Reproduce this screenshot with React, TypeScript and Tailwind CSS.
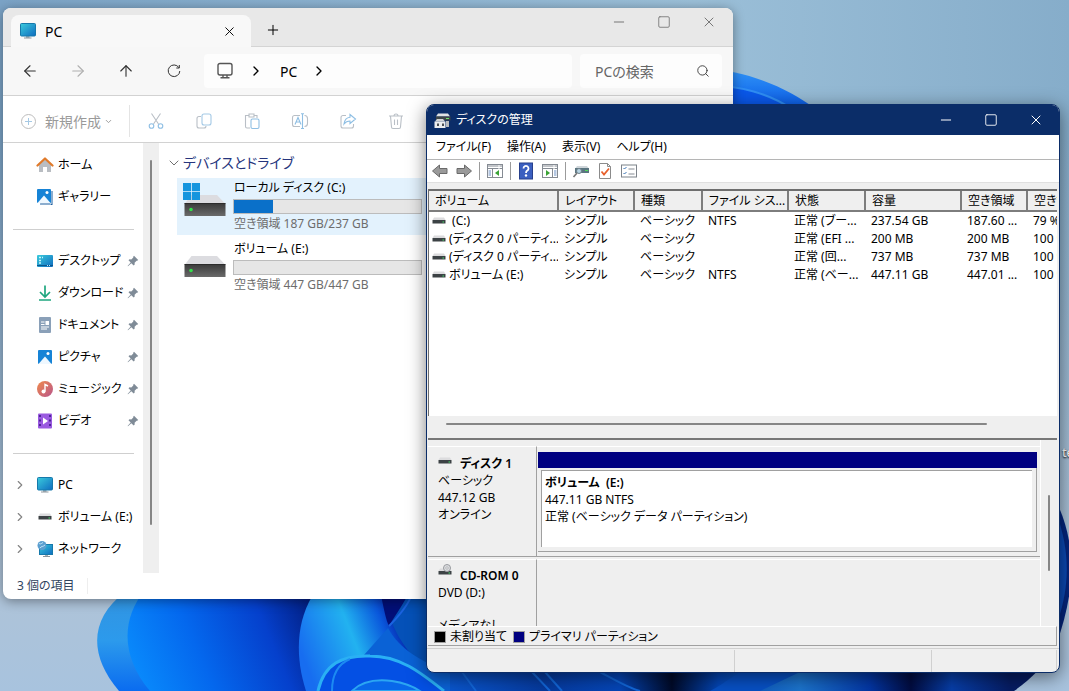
import type { ReactNode } from "react";
import {
  ArrowLeft,
  ArrowRight,
  ArrowUp,
  ChevronDown,
  ChevronRight,
  Minus,
  Plus,
  Search,
  Square,
  X,
} from "lucide-react";

type Volume = {
  name: string;
  layout: string;
  kind: string;
  fs: string;
  status: string;
  capacity: string;
  free: string;
  percent: string;
};

const volumes: Volume[] = [
  { name: " (C:)", layout: "シンプル", kind: "ベーシック", fs: "NTFS", status: "正常 (ブー...", capacity: "237.54 GB", free: "187.60 ...", percent: "79 %" },
  { name: "(ディスク 0 パーティ...", layout: "シンプル", kind: "ベーシック", fs: "", status: "正常 (EFI ...", capacity: "200 MB", free: "200 MB", percent: "100 %" },
  { name: "(ディスク 0 パーティ...", layout: "シンプル", kind: "ベーシック", fs: "", status: "正常 (回...", capacity: "737 MB", free: "737 MB", percent: "100 %" },
  { name: "ボリューム (E:)", layout: "シンプル", kind: "ベーシック", fs: "NTFS", status: "正常 (ベー...", capacity: "447.11 GB", free: "447.01 ...", percent: "100 %" },
];

const columns = [
  { label: "ボリューム", width: "w-[129px]" },
  { label: "レイアウト", width: "w-[76px]" },
  { label: "種類", width: "w-[68px]" },
  { label: "ファイル シス...", width: "w-[86px]" },
  { label: "状態", width: "w-[77px]" },
  { label: "容量", width: "w-[96px]" },
  { label: "空き領域", width: "w-[66px]" },
  { label: "空き領域の割合", width: "w-auto" },
];

function Wallpaper() {
  return (
    <svg className="absolute inset-0 h-full w-full" viewBox="0 0 1069 691" preserveAspectRatio="xMidYMid slice" aria-hidden="true">
      <defs>
        <linearGradient id="sky" x1="0" y1="0" x2="1" y2="0">
          <stop offset="0" stopColor="#7ba3c6" />
          <stop offset="0.65" stopColor="#9bbfd8" />
          <stop offset="1" stopColor="#86adca" />
        </linearGradient>
        <linearGradient id="haze" x1="0" y1="0" x2="0" y2="1">
          <stop offset="0.2" stopColor="#aec3d8" stopOpacity="0" />
          <stop offset="0.85" stopColor="#aec3d8" />
          <stop offset="1" stopColor="#a8c3de" />
        </linearGradient>
        <linearGradient id="petalEdge" x1="0" y1="0" x2="0" y2="1">
          <stop offset="0" stopColor="#3293e0" />
          <stop offset="0.5" stopColor="#2c9aec" />
          <stop offset="1" stopColor="#0a6cf0" />
        </linearGradient>
        <linearGradient id="petalLeft" x1="120" y1="680" x2="310" y2="600" gradientUnits="userSpaceOnUse">
          <stop offset="0" stopColor="#0a92ff" />
          <stop offset="0.4" stopColor="#0468ee" />
          <stop offset="0.75" stopColor="#0540cc" />
          <stop offset="1" stopColor="#021e80" />
        </linearGradient>
        <linearGradient id="petalMid" x1="300" y1="650" x2="400" y2="610" gradientUnits="userSpaceOnUse">
          <stop offset="0" stopColor="#176df0" />
          <stop offset="0.5" stopColor="#22b2f0" />
          <stop offset="0.8" stopColor="#0a58dc" />
          <stop offset="1" stopColor="#04189a" />
        </linearGradient>
        <linearGradient id="floor" x1="427" y1="0" x2="1010" y2="0" gradientUnits="userSpaceOnUse">
          <stop offset="0" stopColor="#0a5cd8" />
          <stop offset="0.2" stopColor="#063a9e" />
          <stop offset="0.33" stopColor="#0546b8" />
          <stop offset="0.42" stopColor="#010a28" />
          <stop offset="0.5" stopColor="#0345b4" />
          <stop offset="0.64" stopColor="#1c74cc" />
          <stop offset="0.76" stopColor="#0336a4" />
          <stop offset="0.83" stopColor="#020c40" />
          <stop offset="0.9" stopColor="#073ea8" />
          <stop offset="1" stopColor="#061c62" />
        </linearGradient>
        <linearGradient id="petalTop" x1="0" y1="70" x2="0" y2="104" gradientUnits="userSpaceOnUse">
          <stop offset="0" stopColor="#2f93f6" />
          <stop offset="1" stopColor="#0f62ea" />
        </linearGradient>
      </defs>
      <rect width="1069" height="691" fill="url(#sky)" />
      <rect width="1069" height="691" fill="url(#haze)" />
      <path d="M700 68C748 70 787 88 816 109H700Z" fill="url(#petalTop)" />
      <path d="M700 84C742 86 768 93 792 109H700Z" fill="#0a58ea" />
      <path d="M700 84C742 86 768 93 792 109" fill="none" stroke="#2f8ef4" strokeWidth="2" />
      <path d="M1050 490C1074 530 1080 580 1056 645Z" fill="#04257c" />
      <path d="M1056 512C1070 550 1070 585 1058 620Z" fill="#0b48b2" />
      <path d="M400 590H1058V645C1045 665 1030 680 1014 691H400Z" fill="url(#floor)" />
      <path d="M125 592C90 618 88 655 119 691H440V590Z" fill="url(#petalEdge)" />
      <path d="M145 590C120 620 122 658 150 691H440V590Z" fill="url(#petalLeft)" />
      <path d="M316 590C294 622 296 660 306 691H440V590Z" fill="url(#petalMid)" />
      <path d="M382 590C390 615 390 635 427 672V590Z" fill="#0551b8" />
      <path d="M380 590C384 610 386 620 389 626C397 612 404 604 410 590Z" fill="#020f78" />
      <path d="M389 626C397 618 408 606 412 594" fill="none" stroke="#1b63e0" strokeWidth="2" />
      <path d="M388 628C400 650 420 660 450 674V691H430C410 664 390 655 364 655Z" fill="#0a62d6" />
      <path d="M318 691C324 664 342 655 370 656C400 656 420 672 444 691Z" fill="#0450e4" />
      <path d="M318 691C324 664 342 655 370 656C400 656 420 672 444 691" fill="none" stroke="#2ab0f4" strokeWidth="3" />
      <path d="M332 691C332 675 338 664 350 659" fill="none" stroke="#1c8af2" strokeWidth="2" />
      <path d="M352 691C362 681 376 679 392 681C405 683 414 687 420 691Z" fill="#0968ea" stroke="#2ba6f2" strokeWidth="2" />
      <path d="M462 672L476 691M532 672L550 691M545 672L562 691M600 672C615 680 628 688 640 691" stroke="#1266d8" strokeWidth="2" fill="none" />
      <path d="M740 672C725 682 716 688 710 691H760L800 672Z" fill="#0750c4" />
    </svg>
  );
}

function MonitorIcon() {
  return (
    <svg width="18" height="18" viewBox="0 0 18 18" aria-hidden="true">
      <defs>
        <linearGradient id="screen" x1="0" y1="0" x2="1" y2="1">
          <stop offset="0" stopColor="#3acbdc" />
          <stop offset="1" stopColor="#0f6cc0" />
        </linearGradient>
      </defs>
      <path d="M7 14h3.500v2H7z" fill="#a7b0b6" />
      <path d="M5 16h7.500" stroke="#8b969e" />
      <rect x="1.500" y="1.500" width="15" height="12.500" rx="1" fill="url(#screen)" stroke="#1679ab" />
    </svg>
  );
}

function HomeIcon() {
  return (
    <svg width="18" height="18" viewBox="0 0 18 18" aria-hidden="true">
      <path d="M3 8.500L9 3l6 5.500V16H11v-5H7v5H3z" fill="#b9bdc2" />
      <path d="M1.500 9.500L9 2.500l7.500 7" fill="none" stroke="#e07a2a" strokeWidth="2.200" strokeLinecap="round" strokeLinejoin="round" />
    </svg>
  );
}

function PictureIcon({ stacked = false }: { stacked?: boolean }) {
  return (
    <svg width="18" height="18" viewBox="0 0 18 18" aria-hidden="true">
      {stacked && <path d="M5 3h11.500v14H4z" fill="#1a5d9e" />}
      {stacked && <path d="M15 2v14H3" fill="none" stroke="#fff" />}
      <rect x={stacked ? 1 : 2} y={stacked ? 1 : 2} width="14" height="14" rx="1" fill="#1683d6" />
      <path d={stacked ? "M1.500 15L8 7.500l6.500 7.500z" : "M2.500 16L9 8.500l6.500 7.500z"} fill="#eff8ff" />
      <circle cx={stacked ? 11 : 12} cy={stacked ? 4.5 : 5.5} r="1.500" fill="#fff" />
    </svg>
  );
}

function DesktopIcon() {
  return (
    <svg width="18" height="18" viewBox="0 0 18 18" aria-hidden="true">
      <rect x="1" y="3" width="16" height="12" rx="1" fill="url(#screen)" />
      <path d="M3 5.500h2M3 8.500h2M6 5.500h1M3 11h2" stroke="#c7f6fc" strokeWidth="1.300" />
      <path d="M1 13.500h16" stroke="#0b568d" />
      <path d="M11 13.500h4" stroke="#b9e6f5" strokeDasharray="1 1" />
    </svg>
  );
}

function DownloadIcon() {
  return (
    <svg width="18" height="18" viewBox="0 0 18 18" fill="none" stroke="#1fa67f" strokeWidth="1.700" aria-hidden="true">
      <path d="M9 1.500v11M4 8l5 5 5-5M3 16h12" />
    </svg>
  );
}

function DocumentIcon() {
  return (
    <svg width="18" height="18" viewBox="0 0 18 18" aria-hidden="true">
      <rect x="3" y="1" width="12" height="16" rx="1" fill="#8aa0b8" />
      <path d="M5 6h3.500M5 8.500h3.500M5 11h8M5 13h6" stroke="#fff" />
      <rect x="9.500" y="5" width="3.500" height="4" fill="#fff" />
    </svg>
  );
}

function MusicIcon() {
  return (
    <svg width="18" height="18" viewBox="0 0 18 18" aria-hidden="true">
      <defs>
        <linearGradient id="disc" x1="0" y1="0" x2="1" y2="1">
          <stop offset="0" stopColor="#f08a4b" />
          <stop offset="1" stopColor="#b8558c" />
        </linearGradient>
      </defs>
      <circle cx="9" cy="9" r="8" fill="url(#disc)" />
      <circle cx="7.500" cy="11.500" r="2" fill="#fff" />
      <path d="M9 11.500V4.500l3 1.500" fill="none" stroke="#fff" strokeWidth="1.400" />
    </svg>
  );
}

function VideoIcon() {
  return (
    <svg width="18" height="18" viewBox="0 0 18 18" aria-hidden="true">
      <rect x="2" y="1.500" width="14" height="15" rx="1" fill="#9a5ae0" />
      <path d="M4 3v13M14 3v13" stroke="#4e2597" strokeWidth="2" strokeDasharray="2 2.500" />
      <path d="M7 5.500v7L12 9z" fill="#fff" />
    </svg>
  );
}

function NetworkIcon() {
  return (
    <svg width="18" height="18" viewBox="0 0 18 18" aria-hidden="true">
      <path d="M9 14h3v2H9z" fill="#a7b0b6" />
      <path d="M7 16.500h7" stroke="#8b969e" />
      <rect x="3.500" y="4.500" width="13" height="10" fill="url(#screen)" stroke="#1679ab" />
      <circle cx="6" cy="5.500" r="4.500" fill="#5c9fd0" />
      <path d="M3 3.500c2 1 2 0 4-1M4 8c1-2 3-1 5-3" stroke="#bfe3f6" fill="none" />
    </svg>
  );
}

function SmallDrive({ disc = false }: { disc?: boolean }) {
  return (
    <svg className="shrink-0" width="14" height="16" viewBox="0 0 14 16" aria-hidden="true">
      <path d="M2 4.500h10l1.500 2.500h-13z" fill="#dcdcde" />
      <path d="M.5 7h13v3.500H.5z" fill="#3c4245" />
      <path d="M10.500 9h1.500" stroke="#44e06a" />
      {disc && (
        <>
          <circle cx="9" cy="4" r="3.500" fill="#dcdde0" stroke="#979a9e" />
          <circle cx="9" cy="4" r="1.200" fill="#fff" stroke="#979a9e" strokeWidth="0.700" />
        </>
      )}
    </svg>
  );
}

function BigDrive({ system = false }: { system?: boolean }) {
  return (
    <svg className="shrink-0" width="44" height="40" viewBox="0 0 44 40" aria-hidden="true">
      <defs>
        <linearGradient id="front" x1="0" y1="0" x2="0" y2="1">
          <stop offset="0" stopColor="#3b3b3b" />
          <stop offset="1" stopColor="#6a6a6a" />
        </linearGradient>
      </defs>
      <path d="M8.500 13h25.500l8.500 9H1.500z" fill="#dcdce0" />
      <path d="M1.500 21.500h41v12.500h-41z" fill="url(#front)" />
      <path d="M1.500 21.500h41" stroke="#2c2c2c" />
      <circle cx="8" cy="27.500" r="1.800" fill="#33e04a" />
      {system && (
        <path d="M0 1h8.200v8.200H0zM9 1h8v8.200H9zM0 10h8.200v8H0zM9 10h8v8H9z" fill="#1595de" />
      )}
    </svg>
  );
}

function PinIcon() {
  return (
    <svg width="12" height="12" viewBox="0 0 12 12" aria-hidden="true">
      <path d="M7 .8l4.200 4.200-1 .8-.6-.1-2 2 .1 1.800-1 1L4.300 8.200 1 11.300l-.4-.4L3.700 7.600 1.500 5.300l1-1 1.800.1 2-2-.1-.7z" fill="#7f8b97" />
    </svg>
  );
}

const quickAccess: { label: string; icon: ReactNode }[] = [
  { label: "デスクトップ", icon: <DesktopIcon /> },
  { label: "ダウンロード", icon: <DownloadIcon /> },
  { label: "ドキュメント", icon: <DocumentIcon /> },
  { label: "ピクチャ", icon: <PictureIcon /> },
  { label: "ミュージック", icon: <MusicIcon /> },
  { label: "ビデオ", icon: <VideoIcon /> },
];

const places: { label: string; icon: ReactNode }[] = [
  { label: "PC", icon: <MonitorIcon /> },
  { label: "ボリューム (E:)", icon: <span className="flex w-[18px] justify-center"><SmallDrive /></span> },
  { label: "ネットワーク", icon: <NetworkIcon /> },
];

function SideRow({ label, icon, pinned = false, expandable = false }: { label: string; icon: ReactNode; pinned?: boolean; expandable?: boolean }) {
  return (
    <li>
      <a href="#" className="flex h-8 items-center pr-1 pl-2.5">
        <span className="w-[23px]">{expandable && <ChevronRight size={14} strokeWidth={2} className="text-[#858585]" />}</span>
        {icon}
        <span className="ml-1 flex-1 whitespace-nowrap">{label}</span>
        {pinned && <PinIcon />}
      </a>
    </li>
  );
}

function DriveItem({ name, free, used, system = false }: { name: string; free: string; used: number; system?: boolean }) {
  return (
    <a href="#" className={system ? "flex h-[57px] bg-[#e3f2fd] pl-1.5" : "flex h-[57px] pl-1.5"}>
      <span className="pt-1">
        <BigDrive system={system} />
      </span>
      <span className="ml-1.5 flex flex-col">
        <span className="pl-px text-[12px] leading-5">{name}</span>
        <span className="mt-px flex h-[15px] w-[189px] border border-[#bcbcbc] bg-[#e6e6e6]">
          <span className="bg-[#0a70c9]" style={{ width: `${used}%` }} />
        </span>
        <span className="pl-px text-[12px] leading-5 text-[#6d6d6d]">{free}</span>
      </span>
    </a>
  );
}

function CommandIcon({ label, children }: { label: string; children: ReactNode }) {
  return (
    <button type="button" aria-label={label} className="flex w-12 items-center justify-center">
      <svg width="18" height="18" viewBox="0 0 18 18" fill="none" stroke="#b9bfc6" strokeWidth="1.100" aria-hidden="true">
        {children}
      </svg>
    </button>
  );
}

function Explorer() {
  return (
    <section className="absolute top-2 right-[336px] bottom-[92px] left-[3px] flex flex-col overflow-hidden rounded-lg bg-white shadow-[0_2px_12px_rgba(0,0,0,0.4)]">
      <header className="flex h-[39px] shrink-0 items-end border-b border-[#d4d4d4] bg-[#e8e8e8] pl-2">
        <div className="-mb-px flex h-8 w-60 items-center rounded-t-lg bg-[#f8f8f8] pr-3.5 pl-2">
          <MonitorIcon />
          <span className="ml-2 flex-1 text-[14px]">PC</span>
          <button type="button" aria-label="タブを閉じる">
            <X size={15} strokeWidth={1.500} />
          </button>
        </div>
        <button type="button" aria-label="新しいタブ" className="mb-2 ml-3.5">
          <Plus size={16} strokeWidth={1.500} />
        </button>
        <div className="mb-4 ml-auto flex gap-[30px] pr-4 text-[#777]">
          <button type="button" aria-label="最小化"><Minus size={16} strokeWidth={1.500} /></button>
          <button type="button" aria-label="最大化"><Square size={14} strokeWidth={1.500} /></button>
          <button type="button" aria-label="閉じる"><X size={16} strokeWidth={1.500} /></button>
        </div>
      </header>

      <nav className="flex h-[49px] shrink-0 items-center border-b border-[#d2d2d2] bg-[#f7f7f7] pr-[11px]">
        <div className="flex w-[201px] gap-[30px] pl-[18px] text-[#333]">
          <button type="button" aria-label="戻る"><ArrowLeft size={18} strokeWidth={1.500} /></button>
          <button type="button" aria-label="進む" className="text-[#b0b0b0]"><ArrowRight size={18} strokeWidth={1.500} /></button>
          <button type="button" aria-label="上へ"><ArrowUp size={18} strokeWidth={1.500} /></button>
          <button type="button" aria-label="更新">
            <svg width="18" height="18" viewBox="0 0 18 18" fill="none" stroke="currentColor">
              <path d="M13.800 5.500A5.800 5.800 0 1 0 14.800 9M14.300 3v3h-3" />
            </svg>
          </button>
        </div>
        <div className="flex h-[34px] flex-1 items-center rounded bg-[#fdfdfd] pl-3 text-[14px]">
          <svg width="18" height="18" viewBox="0 0 18 18" fill="none" stroke="#555" strokeWidth="1.400" aria-hidden="true">
            <rect x="2" y="1.500" width="14" height="11.500" rx="2" />
            <path d="M7 13v2.500M11 13v2.500M4.500 15.800h9" />
          </svg>
          <ChevronRight size={16} strokeWidth={2} className="ml-3.5" />
          <span className="ml-4">PC</span>
          <ChevronRight size={16} strokeWidth={2} className="ml-3.5" />
        </div>
        <label className="ml-2 flex h-[34px] w-[142px] items-center rounded bg-[#fdfdfd] pr-3 pl-[15px]">
          <input type="text" aria-label="検索" placeholder="PCの検索" className="min-w-0 flex-1 text-[14px] outline-none placeholder:text-[#666]" />
          <Search size={14} strokeWidth={1.500} className="text-[#333]" />
        </label>
      </nav>

      <div className="flex h-[47px] shrink-0 items-center border-b border-[#d2d2d2] pt-1 text-[#9a9a9a]">
        <button type="button" className="flex items-center pl-[17px] text-[14px]">
          <svg width="17" height="17" viewBox="0 0 17 17" fill="none" stroke="#bcbcbc" aria-hidden="true">
            <circle cx="8.500" cy="8.500" r="7" />
            <path d="M8.500 5v7M5 8.500h7" stroke="#a6c9e4" />
          </svg>
          <span className="ml-2 whitespace-nowrap">新規作成</span>
          <ChevronDown size={9} strokeWidth={2.500} className="ml-[3px]" />
        </button>
        <div className="ml-4 h-8 border-l border-[#e4e4e4]" />
        <div className="ml-0.5 flex">
          <CommandIcon label="切り取り">
            <path d="M4.500 1.500l7 10.500M13.500 1.500l-7 10.500" />
            <g stroke="#8fbfe4">
              <circle cx="4.500" cy="14" r="2.300" />
              <circle cx="13.500" cy="14" r="2.300" />
            </g>
          </CommandIcon>
          <CommandIcon label="コピー">
            <path d="M6 4.500H4a2 2 0 0 0-2 2V14a2 2 0 0 0 2 2h5a2 2 0 0 0 2-2" />
            <rect x="7" y="2" width="9" height="11" rx="2" stroke="#a3c9e6" />
          </CommandIcon>
          <CommandIcon label="貼り付け">
            <path d="M7 16H4a1.500 1.500 0 0 1-1.500-1.500v-11H6M11 3.500h3V6M6 2h5v3H6z" />
            <rect x="8" y="7" width="8" height="9.500" rx="1.500" stroke="#8fbfe4" />
          </CommandIcon>
          <CommandIcon label="名前の変更">
            <path d="M9 3.500H3.500a2 2 0 0 0-2 2v7a2 2 0 0 0 2 2H9M13.500 3.500a3 3 0 0 1 3 3v5a3 3 0 0 1-3 3" />
            <path d="M4 12.500l3-7 3 7M5 10h4M11.500 2v14.500M10 1.800h3M10 16.500h3" stroke="#8fbfe4" />
          </CommandIcon>
          <CommandIcon label="共有">
            <path d="M7 3.500H4a2 2 0 0 0-2 2V14a2 2 0 0 0 2 2h8.500a2 2 0 0 0 2-2v-2" />
            <path d="M11 2.500l5.500 4.500L11 11.500V9c-3 0-4.500 1-6 3 .5-4 2.500-6.500 6-6.800z" stroke="#8fbfe4" />
          </CommandIcon>
          <CommandIcon label="削除">
            <path d="M2 4h14M3.500 4l1 11a1.500 1.500 0 0 0 1.500 1.500h6a1.500 1.500 0 0 0 1.500-1.500l1-11M7.500 7.500v5.500M10.500 7.500v5.500M7 4a2 2 0 0 1 4 0" />
          </CommandIcon>
        </div>
      </div>

      <div className="flex min-h-0 flex-1">
        <aside className="w-[140px] shrink-0 overflow-hidden pt-1.5 text-[12px]">
          <ul>
            <SideRow label="ホーム" icon={<HomeIcon />} />
            <SideRow label="ギャラリー" icon={<PictureIcon stacked />} />
          </ul>
          <hr className="mt-4 mr-[9px] mb-[15px] ml-2.5 border-[#cfcfcf]" />
          <ul>
            {quickAccess.map((item) => (
              <SideRow key={item.label} {...item} pinned />
            ))}
          </ul>
          <hr className="mt-4 mr-[9px] mb-[15px] ml-2.5 border-[#cfcfcf]" />
          <ul>
            {places.map((item) => (
              <SideRow key={item.label} {...item} expandable />
            ))}
          </ul>
        </aside>
        <div className="flex w-4 shrink-0 justify-center bg-[#efefef] pt-[17px] pb-12">
          <div className="w-0.5 rounded bg-[#868686]" />
        </div>
        <main className="min-w-0 flex-1 pt-2 pl-[7px]">
          <h2 className="flex items-center text-[14px] leading-6 text-[#26357d]">
            <ChevronDown size={16} strokeWidth={1.500} className="text-[#707070]" />
            <span className="ml-px">デバイスとドライブ</span>
          </h2>
          <div className="mt-[3px] flex flex-col gap-1 pl-[11px]">
            <DriveItem name="ローカル ディスク (C:)" free="空き領域 187 GB/237 GB" used={21} system />
            <DriveItem name="ボリューム (E:)" free="空き領域 447 GB/447 GB" used={0} />
          </div>
        </main>
      </div>

      <footer className="flex h-[26px] shrink-0 items-center pl-3.5 text-[12px] text-[#31455f]">
        <span className="pr-3">3 個の項目</span>
        <span className="h-4 border-l border-[#eee]" />
      </footer>
    </section>
  );
}

function ToolButton({ label, children }: { label: string; children: ReactNode }) {
  return (
    <button type="button" aria-label={label}>
      <svg width="18" height="18" viewBox="0 0 18 18" aria-hidden="true">
        {children}
      </svg>
    </button>
  );
}

function ToolDivider() {
  return <div className="h-[18px] border-l border-[#9b9b9b]" />;
}

function PaneGlyph({ flip = false }: { flip?: boolean }) {
  return (
    <>
      <rect x="1.500" y="2.500" width="15" height="13" fill="#fff" stroke="#858b93" />
      <path d="M1.500 4h15M1.500 6.500h15" stroke="#858b93" strokeDasharray="11 1" />
      <path d={flip ? "M11.500 7v8" : "M6.500 7v8"} stroke="#858b93" />
      <path d={flip ? "M13 9h2.500M13 11h2.500M13 13h2.500" : "M2.500 9H5M2.500 11H5M2.500 13H5"} stroke="#6b8fc4" />
      <path d={flip ? "M5 8v6l4-3z" : "M13 8v6l-4-3z"} fill="#3aa335" />
    </>
  );
}

function DiskManagement() {
  return (
    <section className="absolute top-[104px] right-[9px] bottom-[18px] left-[426px] flex flex-col overflow-hidden rounded-lg border border-[#0b2d68] bg-[#efefef] text-[12px] shadow-[0_4px_18px_rgba(0,0,0,0.5)]">
      <header className="flex h-[30px] shrink-0 items-center bg-[#0b2d68] pr-[15px] pl-[7px] text-white">
        <svg width="17" height="17" viewBox="0 0 17 17" aria-hidden="true">
          <path d="M4 1.500h10l2 3H2z" fill="#dfe1e3" />
          <path d="M2 4.500h14.500v4H2z" fill="#3d4547" />
          <path d="M12 6.500h3" stroke="#6be26b" />
          <path d="M3 7h6l2 2.500H1z" fill="#d2d4d6" />
          <path d="M.5 9.500h11V16H.5z" fill="#ecedee" />
          <path d="M3 11.500h2v2.500H3zM8 11.500h2v2.500H8z" fill="#4b4f52" />
          <path d="M12 9h3v6h-3z" fill="#b8bbbe" />
        </svg>
        <h1 className="ml-[5px] flex-1">ディスクの管理</h1>
        <div className="flex gap-[30px]">
          <button type="button" aria-label="最小化"><Minus size={16} strokeWidth={1.500} /></button>
          <button type="button" aria-label="最大化"><Square size={14} strokeWidth={1.500} /></button>
          <button type="button" aria-label="閉じる"><X size={16} strokeWidth={1.500} /></button>
        </div>
      </header>

      <div className="flex h-[25px] shrink-0 items-center gap-4 border-b border-[#b5b5b5] bg-white pl-[9px]">
        <button type="button">ファイル(F)</button>
        <button type="button">操作(A)</button>
        <button type="button">表示(V)</button>
        <button type="button">ヘルプ(H)</button>
      </div>

      <div className="flex h-[23px] shrink-0 items-center gap-1.5 border-b border-[#e0e0e0] bg-white pl-1">
        <ToolButton label="戻る">
          <path d="M1.500 9l7-6v3.500h7.500v5H8.500V15z" fill="#9a9a9a" stroke="#6a6a6a" />
        </ToolButton>
        <ToolButton label="進む">
          <path d="M16.500 9l-7-6v3.500H2v5h7.500V15z" fill="#9a9a9a" stroke="#6a6a6a" />
        </ToolButton>
        <ToolDivider />
        <ToolButton label="コンソール ツリー"><PaneGlyph /></ToolButton>
        <ToolDivider />
        <ToolButton label="ヘルプ">
          <rect x="2.500" y="1" width="13" height="16" fill="#3b5fc0" stroke="#28408c" />
          <path d="M6.500 6.500a2.500 2.500 0 1 1 3.800 2.100c-.9.600-1.300 1-1.300 2.400" fill="none" stroke="#fff" strokeWidth="1.800" />
          <circle cx="9" cy="13.500" r="1.200" fill="#fff" />
        </ToolButton>
        <ToolButton label="操作ウィンドウ"><PaneGlyph flip /></ToolButton>
        <ToolDivider />
        <ToolButton label="更新">
          <path d="M5 4h10l1.500 2H3.500z" fill="#cfd6da" />
          <path d="M3 6h14v5H3z" fill="#5b7680" />
          <path d="M13 8.500h3" stroke="#52dd5a" />
          <circle cx="7" cy="9" r="2.500" fill="#b7d4e3" stroke="#6f7f89" />
          <path d="M5 11l-3.500 4" stroke="#777" strokeWidth="1.600" />
        </ToolButton>
        <ToolButton label="プロパティ">
          <path d="M3.500 1.500h8l3 3v12h-11z" fill="#fff" stroke="#8b8b8b" />
          <path d="M11.500 1.500v3h3" fill="none" stroke="#8b8b8b" />
          <path d="M5.500 9.500l2.500 3 5-6" fill="none" stroke="#e8612c" strokeWidth="1.800" />
        </ToolButton>
        <ToolButton label="設定">
          <rect x="1.500" y="3" width="15" height="12" fill="#fff" stroke="#7d838a" />
          <path d="M3.500 6l1 1 2-2M3.500 11l1 1 2-2" fill="none" stroke="#3f78b8" />
          <path d="M8.500 7h6M8.500 12h6" stroke="#858b93" />
        </ToolButton>
      </div>

      <div className="mr-0.5 ml-px mt-1.5 min-h-0 flex-1 overflow-hidden border-t-2 border-l border-[#6e6e6e] bg-white">
        <table className="w-full table-fixed border-collapse">
          <thead>
            <tr className="h-5">
              {columns.map((col) => (
                <th key={col.label} className={`${col.width} overflow-hidden border-r-2 border-b-2 border-[#7d7d7d] bg-[#efefef] pl-1.5 text-left leading-[18px] font-normal whitespace-nowrap last:border-r-0`}>
                  {col.label}
                </th>
              ))}
            </tr>
          </thead>
          <tbody>
            {volumes.map((v, i) => (
              <tr key={i} className="h-[18px] leading-[18px] whitespace-nowrap">
                <td className="overflow-hidden">
                  <div className="flex items-center pl-[3px]">
                    <SmallDrive />
                    <span className="ml-[3px] whitespace-pre">{v.name}</span>
                  </div>
                </td>
                <td className="overflow-hidden pl-1.5">{v.layout}</td>
                <td className="overflow-hidden pl-1.5">{v.kind}</td>
                <td className="overflow-hidden pl-1.5">{v.fs}</td>
                <td className="overflow-hidden pl-1.5">{v.status}</td>
                <td className="overflow-hidden pl-1.5">{v.capacity}</td>
                <td className="overflow-hidden pl-1.5">{v.free}</td>
                <td className="overflow-hidden pl-1.5">{v.percent}</td>
              </tr>
            ))}
          </tbody>
        </table>
      </div>
      <div className="mr-0.5 ml-px flex h-6 shrink-0 items-start border-b-2 border-[#777] pt-[7px] pr-[70px] pl-[18px]">
        <div className="h-0.5 flex-1 rounded bg-[#868686]" />
      </div>

      <div className="mr-0.5 ml-px flex h-[186px] shrink-0">
        <div className="flex min-w-0 flex-1 flex-col overflow-hidden border-r border-white pt-1.5">
          <div className="flex h-[111px] shrink-0 border-b border-[#a0a0a0]">
            <div className="w-[109px] shrink-0 border-t border-r border-t-white border-r-[#a0a0a0] pt-1.5 pl-2.5 leading-[17px]">
              <div className="flex items-start gap-2">
                <SmallDrive />
                <b className="pt-0.5 font-semibold">ディスク 1</b>
              </div>
              <p>ベーシック</p>
              <p>447.12 GB</p>
              <p>オンライン</p>
            </div>
            <div className="flex min-w-0 flex-1 flex-col border-t border-white pt-[5px] pr-[3px] pb-1 pl-px">
              <div className="h-4 bg-[#000080]" />
              <div className="flex-1 border-r border-b border-[#a0a0a0] pt-0.5 pr-1 pb-1 pl-[3px]">
                <div className="h-full border-t border-l border-[#a0a0a0] bg-white pt-[3px] pl-[3px] leading-[17px] whitespace-nowrap">
                  <p className="font-semibold whitespace-pre">{"ボリューム  (E:)"}</p>
                  <p>447.11 GB NTFS</p>
                  <p>正常 (ベーシック データ パーティション)</p>
                </div>
              </div>
            </div>
          </div>
          <div className="mt-0.5 flex min-h-0 flex-1">
            <div className="w-[109px] shrink-0 border-t border-r border-t-white border-r-[#a0a0a0] pt-1 pl-2.5 leading-[17px]">
              <div className="flex items-start gap-2">
                <SmallDrive disc />
                <b className="pt-[3px] font-semibold whitespace-nowrap">CD-ROM 0</b>
              </div>
              <p>DVD (D:)</p>
              <p className="mt-4">メディアなし</p>
            </div>
            <div className="flex-1 border-t border-white" />
          </div>
        </div>
        <div className="flex w-4 shrink-0 justify-center pt-[55px] pb-[55px]">
          <div className="w-0.5 rounded bg-[#868686]" />
        </div>
      </div>

      <div className="mr-0.5 ml-px flex h-5 shrink-0 items-center border-t border-r border-b border-t-white border-r-[#a0a0a0] border-b-[#a0a0a0] pt-px pl-1.5">
        <span className="size-3 border border-[#a0a0a0] bg-black" />
        <span className="ml-1">未割り当て</span>
        <span className="ml-1.5 size-3 border border-[#a0a0a0] bg-[#000080]" />
        <span className="ml-1">プライマリ パーティション</span>
      </div>
      <footer className="mt-0.5 flex h-6 shrink-0 border-t border-[#d0d0d0] pt-px pr-0.5">
        <span className="flex-1" />
        <span className="w-[197px] border-l border-[#d0d0d0]" />
        <span className="w-[126px] border-x border-[#d0d0d0]" />
      </footer>
    </section>
  );
}

export default function App() {
  return (
    <div className="relative h-screen w-full overflow-hidden bg-[#9bbfd8] font-['Noto_Sans','Noto_Sans_CJK_JP',sans-serif] text-black [font-feature-settings:'palt']">
      <Wallpaper />
      <span className="absolute top-[445px] left-[1062px] text-[12px] leading-4 font-medium whitespace-nowrap text-white [text-shadow:0_1px_2px_#000]">test</span>
      <Explorer />
      <DiskManagement />
    </div>
  );
}
